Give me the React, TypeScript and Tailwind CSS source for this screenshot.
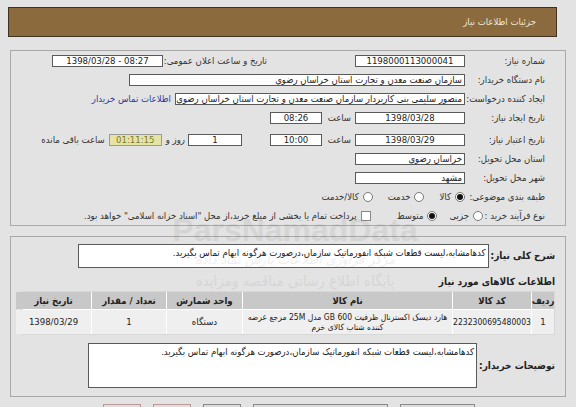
import React from 'react';

const Box = ({ className = '', children, ltr }: { className?: string; children?: React.ReactNode; ltr?: boolean }) => (
  <div
    dir={ltr ? 'ltr' : undefined}
    className={`h-[12px] border border-[#5a5a5a] bg-white flex items-center text-[9.5px] leading-none text-[#222] shrink-0 ${className}`}
  >
    {children}
  </div>
);

const Radio = ({ on }: { on?: boolean }) => (
  <span className="w-[10px] h-[10px] rounded-full border border-[#777] bg-white flex items-center justify-center shrink-0">
    {on && <span className="w-[6px] h-[6px] rounded-full bg-[#111]" />}
  </span>
);

const Label = ({ children }: { children: React.ReactNode }) => (
  <div className="w-[80px] shrink-0 text-[9.5px] leading-none text-[#333] whitespace-nowrap">{children}</div>
);

export default function App() {
  return (
    <div dir="rtl" className="relative w-[576px] h-[430px] bg-[#e3e3e3] font-['DejaVu_Sans_Condensed','DejaVu_Sans',sans-serif] pt-[7px] overflow-hidden">
      {/* header */}
      <div className="mr-[19px] ml-[8px] h-[30px] bg-[#8b6b3e] border border-[#3f3222] flex items-center pr-[20px]">
        <span className="text-[9.5px] text-[#f1e8d8]">جزئیات اطلاعات نیاز</span>
      </div>

      {/* panel 1 */}
      <div className="mt-[13px] mx-[10px] border border-[#a9a9a9] pr-[20px]">
        <div className="h-[19px] flex items-center">
          <Label>شماره نیاز:</Label>
          <Box ltr className="w-[110px] justify-center">1198000113000041</Box>
          <div className="mr-[88px] w-[100px] text-[9.5px] leading-none text-[#333] whitespace-nowrap">تاریخ و ساعت اعلان عمومی:</div>
          <Box ltr className="mr-[4px] w-[111px] justify-center">1398/03/28 - 08:27</Box>
        </div>
        <div className="h-[19px] flex items-center">
          <Label>نام دستگاه خریدار:</Label>
          <Box className="w-[336px] pr-[2px]">سازمان صنعت معدن و تجارت استان خراسان رضوی</Box>
        </div>
        <div className="h-[19px] flex items-center">
          <Label>ایجاد کننده درخواست:</Label>
          <Box className="w-[290px] pr-[2px] overflow-hidden whitespace-nowrap">منصور سلیمی بنی کاربردار سازمان صنعت معدن و تجارت استان خراسان رضوی</Box>
          <span className="mr-[4px] text-[9.5px] leading-none text-[#2b3a9c] whitespace-nowrap">اطلاعات تماس خریدار</span>
        </div>
        <div className="h-[19px] flex items-center">
          <Label>تاریخ ایجاد نیاز:</Label>
          <Box ltr className="w-[110px] justify-center">1398/03/28</Box>
          <span className="w-[33px] pr-[4px] text-[9.5px] leading-none text-[#333]">ساعت</span>
          <Box ltr className="w-[52px] justify-center">08:26</Box>
        </div>
        <div className="h-[19px] mt-[3px] flex items-center">
          <Label>تاریخ اعتبار نیاز:</Label>
          <Box ltr className="w-[110px] justify-center">1398/03/29</Box>
          <span className="w-[33px] pr-[4px] text-[9.5px] leading-none text-[#333]">ساعت</span>
          <Box ltr className="w-[52px] justify-center">10:00</Box>
          <Box className="mr-[28px] w-[54px] justify-center">1</Box>
          <span className="mr-[3px] text-[9.5px] leading-none text-[#333] whitespace-nowrap">روز و</span>
          <div className="mr-[4px] h-[12px] w-[53px] border border-[#9a9a9a] bg-[#e6e3a4] text-[#7a7a2c] text-[9.5px] leading-none flex items-center justify-center">01:11:15</div>
          <span className="mr-[4px] text-[9.5px] leading-none text-[#333] whitespace-nowrap">ساعت باقی مانده</span>
        </div>
        <div className="h-[19px] flex items-center">
          <Label>استان محل تحویل:</Label>
          <Box className="w-[110px] pr-[2px]">خراسان رضوی</Box>
        </div>
        <div className="h-[19px] flex items-center">
          <Label>شهر محل تحویل:</Label>
          <Box className="w-[110px] pr-[2px]">مشهد</Box>
        </div>
        <div className="h-[19px] flex items-center text-[9.5px] leading-none text-[#333]">
          <Label>طبقه بندی موضوعی:</Label>
          <Radio on />
          <span className="mr-[4px]">کالا</span>
          <span className="mr-[15px]"><Radio /></span>
          <span className="mr-[4px]">خدمت</span>
          <span className="mr-[15px]"><Radio /></span>
          <span className="mr-[4px]">کالا/خدمت</span>
        </div>
        <div className="h-[19px] flex items-center text-[9.5px] leading-none text-[#333] whitespace-nowrap">
          <div className="w-[62px] shrink-0">نوع فرآیند خرید :</div>
          <Radio />
          <span className="mr-[4px]">جزیی</span>
          <span className="mr-[12px]"><Radio on /></span>
          <span className="mr-[4px]">متوسط</span>
          <span className="mr-[26px] w-[10px] h-[10px] border border-[#888] bg-white shrink-0" />
          <span className="mr-[4px]">پرداخت تمام یا بخشی از مبلغ خرید،از محل "اسناد خزانه اسلامی" خواهد بود.</span>
        </div>
      </div>

      {/* panel 2 */}
      <div className="mt-[10px] mx-[10px] border border-[#a9a9a9] pr-[10px] pt-[7px] pb-[8px]">
        <div className="flex items-center">
          <div className="shrink-0 text-[10px] font-bold leading-none text-[#222] whitespace-nowrap">شرح کلی نیاز:</div>
          <div className="flex-1 mr-[2px] ml-[67px] h-[24px] border border-[#5a5a5a] bg-white text-[9.5px] leading-none text-[#222] pr-[2px] pt-[3px] whitespace-nowrap overflow-hidden">
            کدهامشابه،لیست قطعات شبکه انفورماتیک سازمان،درصورت هرگونه ابهام تماس بگیرید.
          </div>
        </div>
        <div className="mt-[9px] text-[10px] font-bold leading-none text-[#222]">اطلاعات کالاهای مورد نیاز</div>
        <div className="mt-[4px] w-[533px] bg-white border border-[#d8d8d8] grid grid-cols-[22px_78px_209px_75px_74px_75px] gap-[1px] text-[9.5px] leading-none text-[#222]">
          <div className="h-[17px] bg-[#c8c8c8] font-bold flex items-center justify-center">ردیف</div>
          <div className="h-[17px] bg-[#c8c8c8] font-bold flex items-center justify-center">کد کالا</div>
          <div className="h-[17px] bg-[#c8c8c8] font-bold flex items-center justify-center">نام کالا</div>
          <div className="h-[17px] bg-[#c8c8c8] font-bold flex items-center justify-center">واحد شمارش</div>
          <div className="h-[17px] bg-[#c8c8c8] font-bold flex items-center justify-center">تعداد / مقدار</div>
          <div className="h-[17px] bg-[#c8c8c8] font-bold flex items-center justify-center">تاریخ نیاز</div>
          <div className="h-[24px] bg-[#efefef] flex items-center justify-center">1</div>
          <div className="h-[24px] bg-[#efefef] flex items-center justify-center text-[8.5px]">2232300695480003</div>
          <div className="h-[24px] bg-[#efefef] flex flex-col items-center justify-center text-center text-[8.5px] leading-[10px] whitespace-nowrap overflow-hidden">
            <span>هارد دیسک اکسترنال ظرفیت 600 GB مدل 25M مرجع عرضه</span>
            <span>کننده شتاب کالای خرم</span>
          </div>
          <div className="h-[24px] bg-[#efefef] flex items-center justify-center">دستگاه</div>
          <div className="h-[24px] bg-[#efefef] flex items-center justify-center">1</div>
          <div className="h-[24px] bg-[#efefef] flex items-center justify-center">1398/03/29</div>
        </div>
        <div className="mt-[8px] flex items-center">
          <div className="shrink-0 text-[10px] font-bold leading-none text-[#222] whitespace-nowrap">توضیحات خریدار:</div>
          <div className="flex-1 mr-[2px] ml-[77px] h-[45px] border border-[#5a5a5a] bg-white text-[9.5px] leading-none text-[#222] pr-[2px] pt-[3px] whitespace-nowrap overflow-hidden">
            کدهامشابه،لیست قطعات شبکه انفورماتیک سازمان،درصورت هرگونه ابهام تماس بگیرید.
          </div>
        </div>
      </div>

      {/* buttons */}
      <div dir="ltr" className="mt-[7px] flex pl-[103px] gap-[12px]">
        <div className="w-[38px] h-[20px] border border-[#b79a9a] bg-[#e8dada]" />
        <div className="w-[38px] h-[20px] border border-[#b79a9a] bg-[#e8dada]" />
        <div className="w-[38px] h-[20px] border border-[#8a8a8a] bg-[#dcdcdc]" />
        <div className="w-[135px] h-[20px] border border-[#8a8a8a] bg-[#dcdcdc]" />
        <div className="w-[75px] h-[20px] border border-[#8a8a8a] bg-[#dcdcdc]" />
      </div>

      {/* faint watermark */}
      <div className="pointer-events-none absolute left-[150px] top-[214px] w-[290px] flex flex-col items-center opacity-10 text-[#666]">
        <span dir="ltr" className="font-['Liberation_Sans',sans-serif] font-bold text-[32px] leading-none">ParsNamadData</span>
        <span className="mt-[6px] text-[14px] italic leading-none">مرکز فراوری اطلاعات پارس نماد داده</span>
        <span className="mt-[8px] text-[15px] leading-none">پایگاه اطلاع رسانی مناقصه ومزایده</span>
      </div>
    </div>
  );
}
